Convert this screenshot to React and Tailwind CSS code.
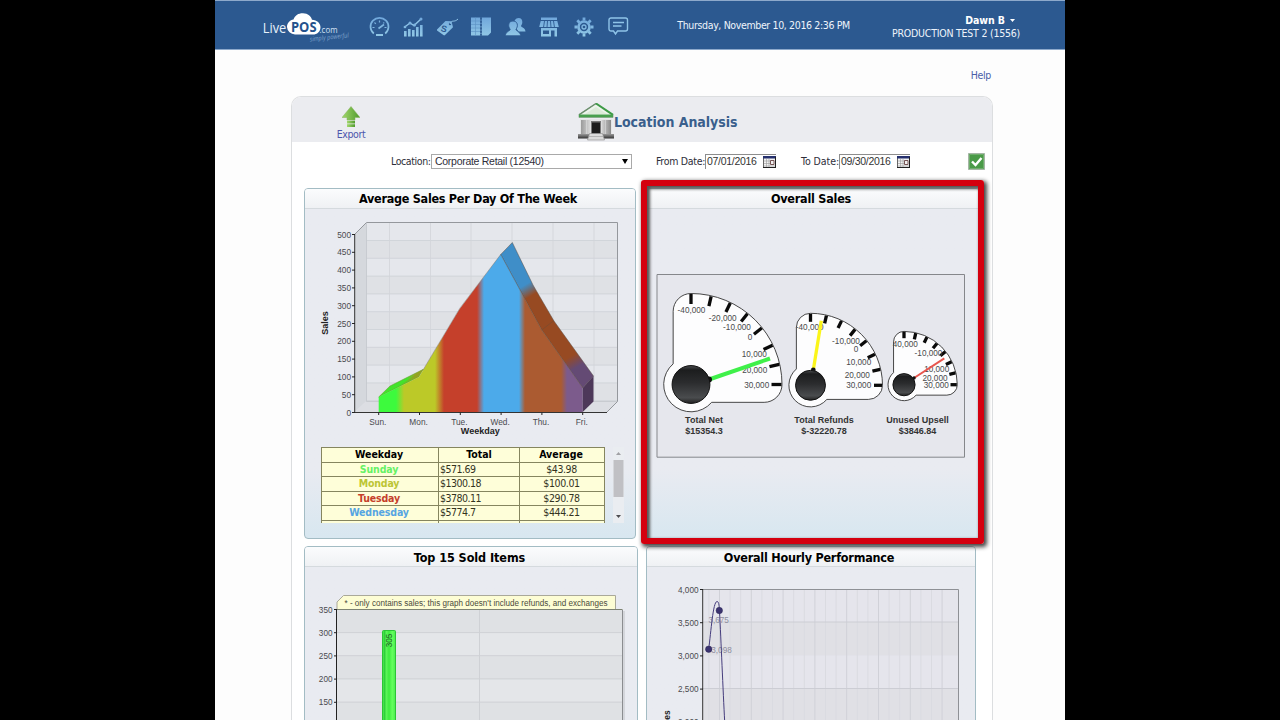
import React from "react";

const sans = "font-['DejaVu_Sans_Condensed','DejaVu_Sans',sans-serif]";

function Logo() {
  return (
    <svg className="h-[36px] w-[90px] shrink-0 overflow-visible" viewBox="262 10 90 36">
      <path d="M295 34.500a8 8 0 0 1-8-7.500c0-4 3-7 6.500-7.500c1.500-4.500 5.500-6.500 9.500-6.300c5 .2 8 3 9 6.500c5 .3 8.500 3.500 8.500 7.500c0 4.500-3.500 7.300-7.500 7.300z" fill="#fff" />
      <text x="262.800" y="33" fontSize="15" fill="#e8f1fb" textLength="23.500" lengthAdjust="spacingAndGlyphs" fontFamily="Open Sans, sans-serif">Live</text>
      <text x="291" y="32.300" fontSize="14.500" fontWeight="bold" fill="#24528c" textLength="25.500" lengthAdjust="spacingAndGlyphs" fontFamily="Open Sans, sans-serif">POS</text>
      <text x="319.500" y="33.300" fontSize="9" fill="#d3e2f3" textLength="18" lengthAdjust="spacingAndGlyphs" fontFamily="Open Sans, sans-serif">.com</text>
      <text x="310" y="41.500" fontSize="6.500" fontStyle="italic" fill="#7fa3cc" textLength="39" lengthAdjust="spacingAndGlyphs" transform="rotate(-6 310 41.500)" fontFamily="Open Sans, sans-serif">simply powerful</text>
    </svg>
  );
}

const navIcons = [
  <g key="gauge" fill="none" stroke="url(#ice)" strokeWidth="1.700">
    <path d="M4.800 16.500A9 8.800 0 1 1 16.200 16.500" />
    <path d="M3.500 10.500h2M5.500 5.500l1.300 1.300M10.500 3.500v2M17.500 10.500h-2M15.200 5.500l-.8.800" strokeWidth="1.200" />
    <path d="M9.500 11.500l5.500-4" strokeWidth="1.700" />
    <path d="M7 18h7" strokeWidth="2" />
  </g>,
  <g key="chart" fill="url(#ice)">
    <path d="M1 14h2.600v5.500H1zM5 12h2.600v7.500H5zM9 13h2.600v6.500H9zM13 10h2.600v9.500H13zM17 8h2.600v11.500H17z" />
    <path d="M1 10.500l6-4.500 4 2.500 7-6.500" fill="none" stroke="#8fc4e8" strokeWidth="1.400" />
    <circle cx="7" cy="6" r="1.500" /><circle cx="11.500" cy="8" r="1.500" /><circle cx="18" cy="2" r="1.500" /><circle cx="2" cy="10" r="1.300" />
  </g>,
  <g key="tag">
    <path d="M0 12.500L8.500 4l6 .3 1.500 6L8 18c-.6.600-1 .6-1.600 0L0 13.500z" fill="url(#ice)" />
    <circle cx="13" cy="7" r="1.200" fill="#2c5990" />
    <path d="M13 7c2-5 4-1 8-5" fill="none" stroke="#8fc4e8" strokeWidth="1" />
    <text x="4" y="15" fontSize="9" fontWeight="bold" fill="#2c5990" transform="rotate(15 7 12)" fontFamily="Liberation Sans, sans-serif">S</text>
  </g>,
  <g key="sheets" fill="url(#ice)">
    <path d="M0 .5h9.500v18H0zM10.500.500h9.500v15l-3 3h-6.500z" />
    <path d="M0 4h9M0 7.500h9M0 11h9M0 14.500h9M4.500.500v18" stroke="#5a90c2" strokeWidth=".6" />
    <path d="M10 .5v18" stroke="#2c5990" strokeWidth="1.600" strokeDasharray="2 1.300" />
  </g>,
  <g key="users" fill="url(#ice)">
    <path d="M13.500 1c2.800 0 4 2 3.800 4.500-.1 1.800-.9 2.600-1.300 3.600 0 1.200 4 1.500 4.500 5.400h-7L9 8c-.3-4 1.500-7 4.500-7z" />
    <path d="M8 4c3.200 0 4.600 2.200 4.400 4.800-.2 1.800-1 2.700-1.400 3.700 0 1.400 4.200 2 4.700 6.300H.3c.5-4.700 4.900-4.900 4.900-6.300-.4-1-1.400-1.900-1.500-3.700C3.500 6.200 4.800 4 8 4z" stroke="#2c5990" strokeWidth=".9" />
  </g>,
  <g key="store" fill="url(#ice)">
    <path d="M2 .5h16V3H2zM1.700 4h16.600l1.500 6H.2z" />
    <path d="M5.500 4l-1 6.500M8.500 4L8 10.500M11.500 4l.5 6.500M14.500 4l1 6.500" stroke="#2c5990" strokeWidth=".9" />
    <path d="M2 11h16v8.500h-2.500V13.500H12v6H2zM4 13.500V17h6v-3.500z" fillRule="evenodd" />
  </g>,
  <g key="gear" fill="none" stroke="url(#ice)">
    <circle cx="10" cy="10" r="5.500" strokeWidth="2.600" />
    <circle cx="10" cy="10" r="2" strokeWidth="1.300" />
    <path d="M10 .5v3M10 16.500v3M.5 10h3M16.500 10h3M3.300 3.300l2.100 2.100M14.600 14.600l2.100 2.100M3.300 16.700l2.100-2.100M14.600 5.400l2.100-2.100" strokeWidth="2.800" />
  </g>,
  <g key="chat" fill="none" stroke="#8fc4e8" strokeWidth="1.400">
    <path d="M3 1h14.500a2 2 0 0 1 2 2v9a2 2 0 0 1-2 2H9.500l-2 3-2-3H3a2 2 0 0 1-2-2V3a2 2 0 0 1 2-2z" />
    <path d="M5 5.500h11M5 9h8.500" />
  </g>,
];

function Header() {
  return (
    <header className="flex h-[50px] shrink-0 border-t border-b border-[#8da9cb] bg-[#2c5990] pl-[47px]">
      <div className="mt-[9px]"><Logo /></div>
      <nav className="mt-[16px] ml-[16.500px] flex gap-[14.200px]">
        {navIcons.map((icon) => (
          <svg key={icon.key} className="h-5 w-5 overflow-visible" viewBox="0 0 20 20">
            <defs>
              <linearGradient id="ice" x1="0" y1="0" x2="0" y2="20" gradientUnits="userSpaceOnUse">
                <stop offset="0" stopColor="#6fa6db" /><stop offset="1" stopColor="#92c9e6" />
              </linearGradient>
            </defs>
            {icon}
          </svg>
        ))}
      </nav>
      <div className="mt-[16px] ml-[49.500px] w-[200px] text-[10.500px] leading-4 tracking-[-0.360px] whitespace-nowrap text-[#eef4fb]">Thursday, November 10, 2016 2:36 PM</div>
      <div className="mt-[13px] ml-auto pr-[45px] text-right text-[10.500px] leading-[12.500px] tracking-[-0.230px] whitespace-nowrap text-[#eef4fb]">
        <div className="flex items-center justify-end gap-[5px] pr-[5px] font-bold text-white">
          <span className="tracking-[-0.050px]">Dawn B</span>
          <svg className="h-[3px] w-[5px]" viewBox="0 0 5 3"><path d="M0 0h5L2.500 3z" fill="#fff" /></svg>
        </div>
        <div>PRODUCTION TEST 2 (1556)</div>
      </div>
    </header>
  );
}

function BankIcon() {
  return (
    <svg className="h-[38px] w-9" viewBox="0 0 36 38">
      <defs>
        <linearGradient id="col" x1="0" x2="1"><stop offset="0" stopColor="#9a9a9a" /><stop offset=".5" stopColor="#fff" /><stop offset="1" stopColor="#8a8a8a" /></linearGradient>
        <linearGradient id="base" x1="0" x2="0" y1="0" y2="1"><stop offset="0" stopColor="#999" /><stop offset="1" stopColor="#333" /></linearGradient>
      </defs>
      <path d="M2 16h32v15H2z" fill="#e4e5e6" />
      <path d="M3 17h5v14H3zM8.500 17h4v14h-4zM23.500 17h4v14h-4zM28 17h5v14h-5z" fill="url(#col)" />
      <path d="M13 18h10v13H13z" fill="#777" />
      <path d="M14 19.500h8v11h-8z" fill="#1c1c1c" />
      <path d="M0 31h12v4.500H0zM24 31h12v4.500H24z" fill="url(#base)" />
      <path d="M11.500 30.500h13l2 6.500h-17z" fill="#dadada" stroke="#8b8b8b" strokeWidth=".6" />
      <path d="M10.500 33.500h15" stroke="#999" strokeWidth=".6" />
      <path d="M18 .5L35 11.500v3H1v-3z" fill="#edf4ed" stroke="#7d9a80" strokeWidth=".7" />
      <path d="M18 .5L1 11.800" stroke="#6c8f6e" strokeWidth="1.400" />
      <path d="M18 .5l17 11.300" stroke="#3d9a46" strokeWidth="2" />
      <path d="M18 4L7 11h22z" fill="#dcebd9" />
      <path d="M1 12.900h34" stroke="#48a04e" strokeWidth="2.600" />
    </svg>
  );
}

function DateField({ label, labelClass, value }) {
  return (
    <div className="flex items-center">
      <span className={labelClass}>{label}</span>
      <div className="flex h-[15px] w-[71px] items-center justify-between border-t border-l border-[#8d8d8d] bg-white pl-px">
        <span className="font-['Liberation_Sans',sans-serif] text-[10.500px] tracking-[-0.300px] text-[#333]">{value}</span>
        <svg className="h-[12px] w-[13px]" viewBox="0 0 13 12">
          <path d="M.5.500h12v11H.5z" fill="#f2f2f2" stroke="#666" />
          <path d="M0 0h13v2.500H0z" fill="#25306e" />
          <path d="M1 5h7M1 7.500h7M1 10h11M3.500 3v8M6 3v8" stroke="#999" strokeWidth=".6" />
          <path d="M7.500 4.500h3.500v4H7.500z" fill="none" stroke="#755" />
          <path d="M12.500 1v11M0 11.500h13" stroke="#222" />
        </svg>
      </div>
    </div>
  );
}

function Card({ title, className, titleClass = "", children }) {
  return (
    <section className={"flex flex-col overflow-hidden rounded-t-[4px] border border-[#a3bcc4] bg-linear-to-b from-[#e9ebf1] from-80% to-[#d8e7f0] " + className}>
      <h2 className={"h-5 shrink-0 border-b border-[#d5dade] bg-linear-to-b from-[#fbfcfd] to-[#eff1f4] text-center text-[12.500px] font-bold whitespace-nowrap text-black " + titleClass}>{title}</h2>
      {children}
    </section>
  );
}

const arial = "Liberation Sans, Arial, sans-serif";
const yLabels = [500, 450, 400, 350, 300, 250, 200, 150, 100, 50, 0];
const days = ["Sun.", "Mon.", "Tue.", "Wed.", "Thu.", "Fri."];

function bands(colors) {
  const edges = [[396, 404], [435, 444], [477, 484], [519, 525], [561, 567]];
  const stops = [];
  colors.forEach((c, i) => {
    const from = i === 0 ? 378 : edges[i - 1][1];
    const to = i === 5 ? 594 : edges[i][0];
    stops.push([from, c], [to, c]);
  });
  return stops.map(([x, c], i) => <stop key={i} offset={(x - 378) / 216} stopColor={c} />);
}

function WeekChart() {
  return (
    <svg className="h-[233px] w-[330px] shrink-0" viewBox="305 209 330 233" fontFamily={arial}>
      <defs>
        <linearGradient id="front" gradientUnits="userSpaceOnUse" x1="378" x2="594" y1="0" y2="0">
          {bands(["#3dfa3d", "#bcc928", "#c5402b", "#4caaea", "#ab5b31", "#7c5b8c"])}
        </linearGradient>
        <linearGradient id="top" gradientUnits="userSpaceOnUse" x1="389" x2="605" y1="0" y2="0">
          {bands(["#42e32c", "#9aa822", "#a53524", "#3f8ec8", "#974a22", "#624771"])}
        </linearGradient>
        <linearGradient id="slope" gradientUnits="userSpaceOnUse" x1="510" y1="250" x2="590" y2="385">
          <stop offset="0" stopColor="#3f8ec8" /><stop offset=".24" stopColor="#3f8ec8" /><stop offset=".32" stopColor="#974a22" />
          <stop offset=".78" stopColor="#974a22" /><stop offset=".86" stopColor="#644a74" /><stop offset="1" stopColor="#644a74" />
        </linearGradient>
      </defs>
      <path d="M366.500 222.500H617.500V401H366.500z" fill="#e5e7ec" />
      {[0, 1, 2, 3, 4].map((i) => <path key={i} d={`M366.500 ${240.500 + i * 35.600}h251v17.800h-251z`} fill="#dfe1e5" />)}
      <path d="M354.500 234.500L366.500 222.500V401L354.500 412.500z" fill="#d5d8dd" />
      <path d="M354.500 412.500L366.500 401H617.500L606.500 412.500z" fill="#dcdee3" />
      {yLabels.slice(1).map((v, i) => <path key={v} d={`M366.500 ${240.500 + i * 17.800}h251`} stroke="#cdd0d5" strokeWidth=".8" />)}
      {[389.500, 430.500, 471, 512, 553, 594].map((x) => <path key={x} d={`M${x} 223V401`} stroke="#d2d4d9" strokeWidth=".8" />)}
      <path d="M354.500 234.500L366.500 222.500H617.500V401.500L606.500 412.500" fill="none" stroke="#94979c" />
      <path d="M366.500 223V401.500H617" fill="none" stroke="#c3c6cb" strokeWidth=".8" />
      <path d="M378.700 397L390 386L423.300 369.300L418.700 377z" fill="url(#top)" stroke="#63962a" strokeWidth=".5" />
      <path d="M500.700 254.500L512.300 242.500L533 285L554 321L593.500 376L582.700 388L541.700 330z" fill="url(#slope)" stroke="#5c5048" strokeWidth=".5" />
      <path d="M378.700 412V397L419 377L423.500 369.500L459.700 309L500.700 254.500L541.700 330L582.700 388V412z" fill="url(#front)" />
      <path d="M388 392l12-6.500 23-16-5 7z" fill="#8e9c20" opacity=".5" />
      <path d="M541.700 330L554 320.500M423 370L460 308L500.700 254.500L541.700 330L582.700 388" fill="none" stroke="#5b4a3c" strokeWidth=".5" opacity=".7" />
      <path d="M582.700 388L593.500 376V401.500L582.700 412z" fill="#4d3859" />
      <path d="M354.700 234V412.500H607" fill="none" stroke="#333" />
      {yLabels.map((v, i) => (
        <g key={v}>
          <path d={`M352 ${234.500 + i * 17.800}h3`} stroke="#222" />
          <text x="351" y={237.500 + i * 17.800} fontSize="8.300" fill="#4a4a4e" textAnchor="end">{v}</text>
        </g>
      ))}
      {days.map((d, i) => (
        <g key={d}>
          <path d={`M${378.700 + i * 40.800} 412.500v2.500`} stroke="#222" />
          <text x={377.800 + i * 40.800} y="425" fontSize="8.300" fill="#4a4a4e" textAnchor="middle">{d}</text>
        </g>
      ))}
      <text x="480.300" y="434" fontSize="9" fontWeight="bold" fill="#222" textAnchor="middle">Weekday</text>
      <text x="328" y="323" fontSize="9" fontWeight="bold" fill="#222" textAnchor="middle" transform="rotate(-90 328 323)">Sales</text>
    </svg>
  );
}

function Cell({ className, children }) {
  return <td className={"h-[14.500px] border border-[#85855f] p-0 leading-[13px] " + className}>{children}</td>;
}

function WeekTable() {
  const rows = [
    ["Sunday", "$571.69", "$43.98", "text-[#66f266]"],
    ["Monday", "$1300.18", "$100.01", "text-[#bcc535]"],
    ["Tuesday", "$3780.11", "$290.78", "text-[#c5402b]"],
    ["Wednesday", "$5774.7", "$444.21", "text-[#56a5e2]"],
    ["", "", "", ""],
  ];
  return (
    <div className="mt-[5px] ml-4 flex h-[76px] w-[303px] justify-between overflow-hidden">
      <table className="w-[283px] table-fixed border-collapse bg-[#fefed9] text-center text-[10.500px] text-[#33331f]">
        <colgroup><col className="w-[117px]" /><col className="w-[81px]" /><col className="w-[85px]" /></colgroup>
        <tbody>
          <tr className="font-bold text-black"><Cell className="pr-0.5!">Weekday</Cell><Cell className="">Total</Cell><Cell className="pr-0.5!">Average</Cell></tr>
          {rows.map(([d, t, a, c]) => (
            <tr key={d}>
              <Cell className={"pr-0.5! font-bold tracking-[-0.150px] " + c}>{d}</Cell>
              <Cell className="pl-px! text-left tracking-[-0.500px]">{t}</Cell>
              <Cell className="pr-px! tracking-[-0.400px]">{a}</Cell>
            </tr>
          ))}
        </tbody>
      </table>
      <svg className="h-[76px] w-[11px]" viewBox="0 0 11 76">
        <path d="M0 0h11v76H0z" fill="#eaedf1" />
        <path d="M3 8l2.500-3L8 8z" fill="#a0a0a4" />
        <path d="M.5 13h10v37H.5z" fill="#c0c0c4" />
        <path d="M3 68l2.500 3L8 68z" fill="#4c4c50" />
      </svg>
    </div>
  );
}

const gauges = [
  { cx: 691, cy: 384.500, r: 91, tick: 10, needle: [709, 379.500, 770, 358.500], color: "#3ff04a", width: 4, tx: 704, name: "Total Net", value: "$15354.3",
    labels: [["-40,000", 691.500, 310], ["-20,000", 722.700, 317.700], ["-10,000", 737, 327.300], ["0", 750, 337], ["10,000", 754.300, 354.300], ["20,000", 754.700, 370.300], ["30,000", 756.700, 385]] },
  { cx: 810.500, cy: 385.300, r: 72, tick: 8, needle: [813.300, 370, 821.300, 320.700], color: "#fbf51a", width: 3.300, tx: 824, name: "Total Refunds", value: "$-32220.78",
    labels: [["-40,000", 809.700, 327], ["-10,000", 846, 341], ["0", 856, 349], ["10,000", 858.700, 362], ["20,000", 857.300, 374.700], ["30,000", 858.700, 385]] },
  { cx: 904, cy: 384.700, r: 53.300, tick: 6.300, needle: [914, 378, 944.300, 358.300], color: "#e8564e", width: 2, tx: 917.500, name: "Unused Upsell", value: "$3846.84",
    labels: [["40,000", 905.300, 343.700], ["-10,000", 928.500, 353.300], ["10,000", 936.700, 369], ["20,000", 935, 378], ["30,000", 936.300, 385]] },
];

function Gauge({ g }) {
  const { cx, cy, r } = g;
  const o = r * 0.196;
  const c = r * 0.3;
  const h = Math.sqrt(c * c - o * o);
  const d = `M${cx} ${cy - r}A${r} ${r} 0 0 1 ${cx + r} ${cy}A${o} ${o} 0 0 1 ${cx + r - o} ${cy + o}H${cx + h}A${c} ${c} 0 1 1 ${cx - o} ${cy - h}V${cy - r + o}A${o} ${o} 0 0 1 ${cx} ${cy - r}z`;
  const [x1, y1, x2, y2] = g.needle;
  return (
    <g>
      <path d={d} fill="#fdfdfe" stroke="#333" strokeWidth=".9" />
      {[0, 1, 2, 3, 4, 5, 6, 7].map((i) => (
        <path key={i} d={`M${cx} ${cy - r + 0.500}v${g.tick}`} stroke="#0a0a0a" strokeWidth="3.300" transform={`rotate(${(i * 90) / 7} ${cx} ${cy})`} />
      ))}
      {g.labels.map(([t, x, y]) => (
        <text key={t} x={x} y={y + 3} fontSize="8.200" fill="#4a4a4c" textAnchor="middle">{t}</text>
      ))}
      <path d={`M${x1} ${y1}L${x2} ${y2}`} stroke={g.color} strokeWidth={g.width} />
      <circle cx={x1} cy={y1} r={r * 0.033} fill="#111" />
      <circle cx={cx} cy={cy} r={r * 0.208} fill="url(#hub)" stroke="#111" />
      <text x={g.tx} y="423" fontSize="9" fontWeight="bold" fill="#333" textAnchor="middle">{g.name}</text>
      <text x={g.tx} y="433.700" fontSize="9" fontWeight="bold" fill="#333" textAnchor="middle">{g.value}</text>
    </g>
  );
}

function GaugesChart() {
  return (
    <svg className="mt-[65px] ml-[9px] h-[185px] w-[310px] shrink-0" viewBox="656 274 310 185" fontFamily={arial}>
      <defs>
        <linearGradient id="hub" x1="0" y1="0" x2="0" y2="1">
          <stop offset="0" stopColor="#4b4d50" /><stop offset=".12" stopColor="#1c1d1e" /><stop offset=".45" stopColor="#2b2c2e" /><stop offset=".85" stopColor="#4a4c4e" /><stop offset="1" stopColor="#222" />
        </linearGradient>
      </defs>
      <path d="M657 274.500H964.500V457.200H657z" fill="#e6e7ed" stroke="#85878b" />
      {gauges.map((g) => <Gauge key={g.name} g={g} />)}
    </svg>
  );
}

function ItemsChart() {
  return (
    <svg className="h-[154px] w-[332px] shrink-0" viewBox="305 567 332 154" fontFamily={arial}>
      <defs>
        <linearGradient id="bar" x1="0" x2="1">
          <stop offset="0" stopColor="#5cf558" /><stop offset=".15" stopColor="#2dcf3a" /><stop offset=".3" stopColor="#5cf558" /><stop offset=".5" stopColor="#3dea3f" /><stop offset=".75" stopColor="#66ff5e" /><stop offset=".95" stopColor="#4ff050" /><stop offset="1" stopColor="#22b42c" />
        </linearGradient>
      </defs>
      <path d="M336.500 609.500H622.500V722H336.500z" fill="#e4e6e9" />
      <path d="M337 609.500h286v23.100H337zM337 655.800h286v23.100H337zM337 702.100h286v20H337z" fill="#dfe1e4" />
      {[632.600, 655.700, 678.900, 702.100].map((y) => <path key={y} d={`M337 ${y}h286`} stroke="#cfd1d5" />)}
      <path d="M479.500 610v112" stroke="#cfd1d5" />
      <path d="M624 611v111" stroke="#bfc1c5" />
      <path d="M622.500 610v112" stroke="#8b8d90" />
      <path d="M337 609.500v-7.500l6.500-6.500H615.500v14z" fill="#fdfdd4" stroke="#aaa99a" />
      <text x="344.500" y="606" fontSize="8.300" fill="#4a4a3c" textLength="263" lengthAdjust="spacingAndGlyphs">* - only contains sales; this graph doesn't include refunds, and exchanges</text>
      <path d="M337 609.500H622.500" stroke="#7d8272" />
      <path d="M336.500 609v112" stroke="#222" />
      {[350, 300, 250, 200, 150].map((v, i) => (
        <g key={v}>
          <path d={`M334 ${609.500 + i * 23.200}h3`} stroke="#222" />
          <text x="332.500" y={612.500 + i * 23.200} fontSize="8.200" fill="#4a4a4e" textAnchor="end">{v}</text>
        </g>
      ))}
      <path d="M382.500 722V631.500q0-1 1-1h11q1 0 1 1V722z" fill="url(#bar)" stroke="#2dc437" />
      <text x="392" y="640.500" fontSize="8.200" fill="#21602a" textAnchor="middle" transform="rotate(-90 392 640.500)">305</text>
    </svg>
  );
}

function HourlyChart() {
  return (
    <svg className="h-[154px] w-[328px] shrink-0" viewBox="647 567 328 154" fontFamily={arial}>
      <path d="M702.500 589.500H958.500V722H702.500z" fill="#e5e5ec" />
      <path d="M703 622h255v33.500H703zM703 688.500h255v34H703z" fill="#e0e0e5" />
      {Array.from({ length: 23 }, (_, i) => (
        <path key={i} d={`M${708.900 + i * 10.600} 590v132`} stroke={i % 3 === 1 ? "#d0d1d8" : "#dadbe1"} />
      ))}
      {[622, 688.500].map((y) => <path key={y} d={`M703 ${y}h255`} stroke="#cccdd4" />)}
      <path d="M702.500 589.500H958.500V722" fill="none" stroke="#8e9095" />
      <path d="M702.700 589v133" stroke="#333" />
      {["4,000", "3,500", "3,000", "2,500", "2,000"].map((v, i) => (
        <g key={v}>
          <path d={`M700 ${589.500 + i * 33.200}h3`} stroke="#222" />
          <text x="698.500" y={592.500 + i * 33.200} fontSize="8.200" fill="#4a4a4e" textAnchor="end">{v}</text>
        </g>
      ))}
      <text x="670" y="721.500" fontSize="8.500" fontWeight="bold" fill="#222" textAnchor="middle" transform="rotate(-90 670 721.500)">Sales</text>
      <text x="718.700" y="623" fontSize="8.200" fill="#8e8ea0" textAnchor="middle">3,675</text>
      <text x="721.500" y="653" fontSize="8.200" fill="#8e8ea0" textAnchor="middle">3,098</text>
      <path d="M708.700 649C711 632 713 601.500 717 601.500C719.500 601.500 719 608 719.500 611C721 640 723 690 724.700 722" fill="none" stroke="#453c7c" />
      <circle cx="719.300" cy="610.500" r="3.200" fill="#3b3370" stroke="#2b2555" strokeWidth=".5" />
      <circle cx="708.700" cy="649.200" r="3.200" fill="#3b3370" stroke="#2b2555" strokeWidth=".5" />
    </svg>
  );
}

export default function App() {
  return (
    <div className={"flex h-[720px] w-[1280px] justify-center overflow-hidden bg-black " + sans}>
      <div className="flex w-[850px] flex-col overflow-hidden bg-[#fdfdfd]">
        <Header />
        <div className="flex h-[46px] shrink-0 justify-end pt-[17px] pr-[74px] text-[10.500px] leading-4 tracking-[-0.350px] text-[#4a5ea8]">Help</div>
        <main className="ml-[76px] flex w-[702px] grow flex-col rounded-t-[10px] border border-b-0 border-[#dcdee0] bg-white">
          <div className="relative flex h-[45px] shrink-0 rounded-t-[9px] bg-[#ebecf0]">
            <div className="ml-[44px] flex w-[30px] flex-col items-center pt-[9px]">
              <svg className="h-[22px] w-[18px]" viewBox="0 0 18 22">
                <defs><linearGradient id="up" x1="0" x2="1"><stop offset="0" stopColor="#a3d86d" /><stop offset="1" stopColor="#4f9a2c" /></linearGradient></defs>
                <path d="M9 .5l9 11h-5V14H5v-2.500H0z" fill="url(#up)" stroke="#86b35d" strokeWidth=".5" />
                <path d="M5 14.800h8v2.700H5zM5 18.300h8V21H5z" fill="url(#up)" />
              </svg>
              <div className="text-[10.500px] leading-[13px] tracking-[-0.400px] text-[#4c56ad]">Export</div>
            </div>
            <div className="mt-[6px] ml-[212px] flex">
              <BankIcon />
              <h1 className="text-[14px] leading-[38px] font-bold tracking-[-0.030px] whitespace-nowrap text-[#3a5f8c]">Location Analysis</h1>
            </div>
          </div>
          <div className="flex h-[46px] shrink-0 items-center pb-[7px] pl-[99px] text-[10.500px] whitespace-nowrap text-[#2e2e3a]">
            <span className="w-[40px] tracking-[-0.400px]">Location:</span>
            <div className="flex h-[15px] w-[201px] items-center justify-between border border-[#a9a9a9] bg-white px-[3px] font-['Liberation_Sans',sans-serif]">
              <span className="tracking-[-0.280px]">Corporate Retail (12540)</span>
              <svg className="h-[5px] w-[6px]" viewBox="0 0 6 5"><path d="M0 0h6L3 5z" fill="#000" /></svg>
            </div>
            <div className="ml-6 flex gap-[25px]">
              <DateField label="From Date:" labelClass="w-[49px] tracking-[-0.300px]" value="07/01/2016" />
              <DateField label="To Date:" labelClass="w-[38px] tracking-[-0.060px]" value="09/30/2016" />
            </div>
            <svg className="ml-auto mr-[7px] h-[17px] w-[17px]" viewBox="0 0 17 17">
              <path d="M.5.500h16v16H.5z" fill="#4a9a48" stroke="#a5b5a5" />
              <path d="M1.500 1.500h14v14h-14z" fill="none" stroke="#6fae6c" />
              <path d="M4 8.500l3.500 3.500 6-7" fill="none" stroke="#fff" strokeWidth="2.400" />
            </svg>
          </div>
          <div className="flex flex-col gap-[7px] pl-3">
            <div className="relative flex gap-[10px]">
              <Card title="Average Sales Per Day Of The Week" titleClass="leading-[20px] tracking-[-0.280px] pr-1" className="h-[351px] w-[332px] rounded-b-[4px]">
                <WeekChart />
                <WeekTable />
              </Card>
              <Card title="Overall Sales" titleClass="leading-[20px] tracking-[-0.230px] pr-1" className="h-[351px] w-[334px]">
                <GaugesChart />
              </Card>
              <div className="absolute top-[-8px] left-[337px] h-[364px] w-[343px] rounded-[3px] border-[6px] border-[#d4000f] shadow-[2px_2px_4px_1px_#444,inset_2px_2px_3px_1px_#555]" />
            </div>
            <div className="flex gap-2">
              <Card title="Top 15 Sold Items" titleClass="leading-[22px] tracking-[-0.060px] pr-[3px]" className="h-[351px] w-[334px]"><ItemsChart /></Card>
              <Card title="Overall Hourly Performance" titleClass="leading-[22px] tracking-[-0.230px] pr-1" className="h-[351px] w-[330px]"><HourlyChart /></Card>
            </div>
          </div>
        </main>
      </div>
    </div>
  );
}
